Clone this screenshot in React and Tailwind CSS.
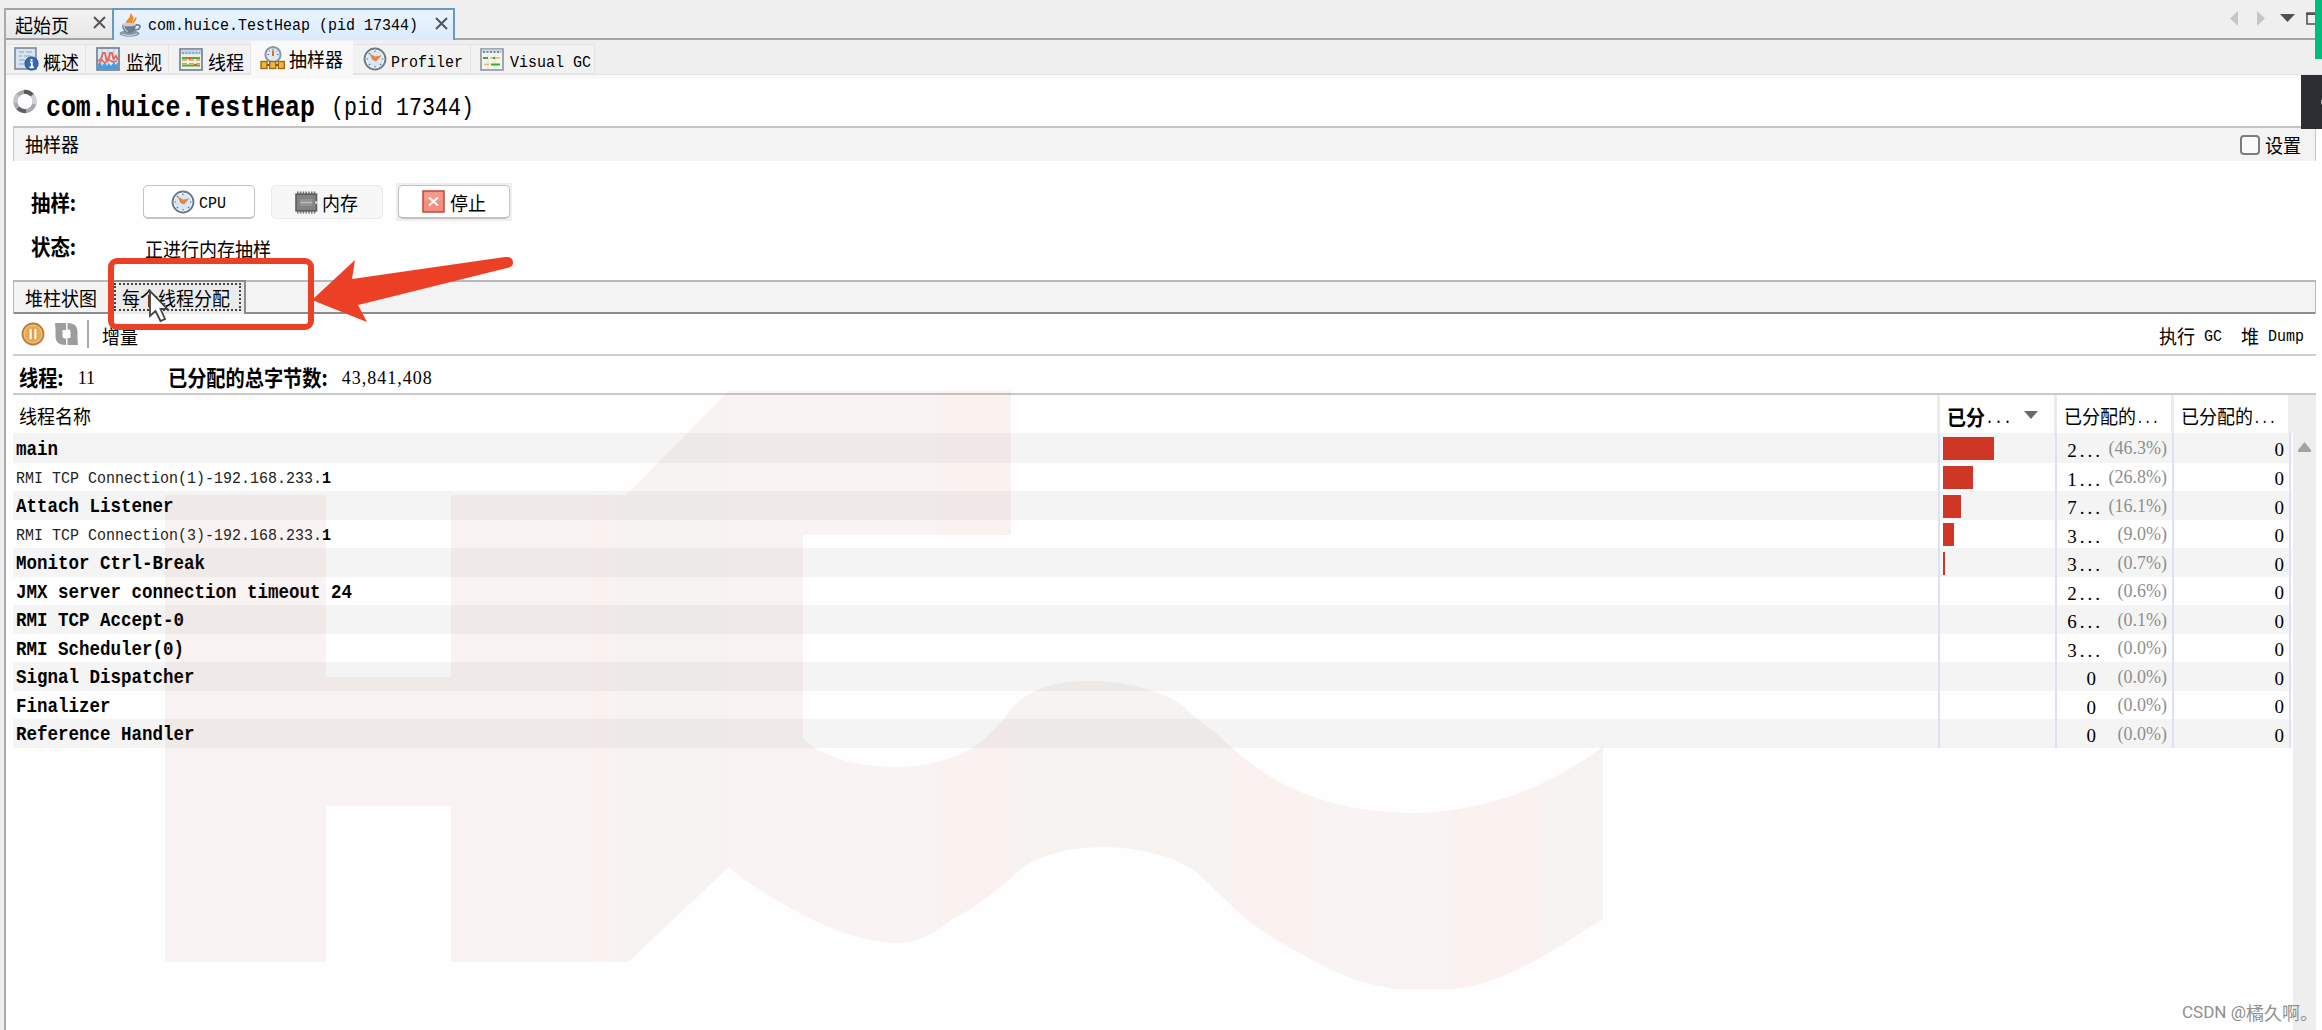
import React from "react";
import clsx from "clsx";

const threads = [
  { name: "main", bar: 51, bytes: "2...", pct: "(46.3%)" },
  { name: "RMI TCP Connection(1)-192.168.233.", tail: "1", bar: 30, bytes: "1...", pct: "(26.8%)" },
  { name: "Attach Listener", bar: 18, bytes: "7...", pct: "(16.1%)" },
  { name: "RMI TCP Connection(3)-192.168.233.", tail: "1", bar: 11, bytes: "3...", pct: "(9.0%)" },
  { name: "Monitor Ctrl-Break", bar: 2, bytes: "3...", pct: "(0.7%)" },
  { name: "JMX server connection timeout 24", bar: 0, bytes: "2...", pct: "(0.6%)" },
  { name: "RMI TCP Accept-0", bar: 0, bytes: "6...", pct: "(0.1%)" },
  { name: "RMI Scheduler(0)", bar: 0, bytes: "3...", pct: "(0.0%)" },
  { name: "Signal Dispatcher", bar: 0, bytes: "0", pct: "(0.0%)" },
  { name: "Finalizer", bar: 0, bytes: "0", pct: "(0.0%)" },
  { name: "Reference Handler", bar: 0, bytes: "0", pct: "(0.0%)" },
];

// Chinese label
function Cn({ children, className }) {
  return (
    <span
      className={clsx(
        "inline-block whitespace-pre font-['Noto_Sans_CJK_SC',sans-serif] leading-none scale-y-[1.1]",
        className || "text-[18px]"
      )}
    >
      {children}
    </span>
  );
}

// Fixed pitch latin text, 9px per character by default
function Mono({ children, className }) {
  return (
    <span
      className={clsx(
        "inline-block whitespace-pre font-['Liberation_Mono',monospace] leading-none scale-y-[1.15]",
        className || "text-[15px]"
      )}
    >
      {children}
    </span>
  );
}

// Numbers, serif digits are half an em wide
function Num({ children, className }) {
  return (
    <span
      className={clsx(
        "inline-block whitespace-pre font-['Liberation_Serif',serif] leading-none",
        className || "text-[18px]"
      )}
    >
      {children}
    </span>
  );
}

/* ---------- icons ---------- */

function CloseIcon() {
  return (
    <svg width="13" height="13" viewBox="0 0 13 13" stroke="#555" strokeWidth="2">
      <path d="M1 1L12 12M12 1L1 12" />
    </svg>
  );
}

function JavaIcon() {
  return (
    <svg width="23" height="24" viewBox="0 0 23 24" fill="none">
      <path d="M9 12C3 8 13 6 11 0C18 5 12 8 13 12Z" fill="#ee8a2c" />
      <path d="M14 11C13 8 18 7 16.5 4.5" stroke="#ee8a2c" strokeWidth="1.8" />
      <ellipse cx="10.5" cy="20.5" rx="10" ry="3.2" fill="#8796a3" />
      <path d="M3 11H17C17 17 14 20 10 20C6 20 3 17 3 11Z" fill="#6d7f8f" />
      <ellipse cx="10" cy="11.5" rx="7" ry="1.8" fill="#c6d1da" />
      <path d="M17 12C23 11 22 17 15 17" stroke="#6d7f8f" strokeWidth="1.8" />
      <path d="M5 13C5.5 16 7 18 9 18.6" stroke="#b5c2cd" strokeWidth="1.4" />
      <path d="M3 21C8 23 13 23 18 20.5" stroke="#d5dde3" />
    </svg>
  );
}

function OverviewIcon() {
  return (
    <svg width="25" height="24" viewBox="0 0 25 24">
      <rect x="1" y="1" width="21" height="21" fill="#d7e4f0" stroke="#7a8998" strokeWidth="1.6" />
      <path d="M5 5H10M12 5H18M5 9H8M10 9H17M5 13H11M5 17H10" stroke="#8fa1b2" strokeWidth="1.2" />
      <circle cx="17.5" cy="16.5" r="6.6" fill="#3566c0" stroke="#224c9a" />
      <path d="M17.5 12V14M16 15.4H17.8V20M15.6 20.2H19.8" stroke="#fff" strokeWidth="1.9" />
    </svg>
  );
}

function MonitorIcon() {
  return (
    <svg width="24" height="24" viewBox="0 0 24 24" fill="none">
      <rect x="1" y="1" width="22" height="22" fill="#dbe8f5" stroke="#6b7c8e" strokeWidth="1.6" />
      <path d="M6 2V22M12 2V22M18 2V22" stroke="#b9c9d9" />
      <path d="M2 22V17L4 15L6 19L9 15L11 19L13 16L15 19L18 15L20 18L22 15V22Z" fill="#4b9be0" />
      <path d="M2 14L5 12L7 6H9L10.5 13L13 11L14 6H16L17.5 12L20 9L22 13" stroke="#e4685c" strokeWidth="1.9" />
      <path d="M3 16L6 13L9 16L13 13L17 15L21 14" stroke="#e4685c" strokeWidth="1.5" />
    </svg>
  );
}

function ThreadsIcon() {
  return (
    <svg width="24" height="23" viewBox="0 0 24 23" fill="none">
      <rect x="1" y="1" width="22" height="21" fill="#eef1e4" stroke="#6b7c8e" strokeWidth="1.6" />
      <path d="M2 4H22" stroke="#c3d4e6" strokeWidth="4.5" />
      <path d="M3 5H21" stroke="#5b7ea8" strokeWidth="1.2" strokeDasharray="2 1.4" />
      <path d="M3 10H21M3 17.5H21" stroke="#4cae3e" strokeWidth="2" />
      <path d="M3 12H21M3 15.6H21" stroke="#ee9a3c" strokeWidth="1.4" strokeDasharray="5 2" />
      <path d="M9 10.5H12M15 17H18" stroke="#de5a3a" strokeWidth="1.8" />
    </svg>
  );
}

function SamplerIcon() {
  return (
    <svg width="25" height="24" viewBox="0 0 25 24" fill="none">
      <circle cx="13" cy="8.7" r="7.6" fill="#dce9f6" stroke="#8a98a8" strokeWidth="2" />
      <path d="M13 4.5V10" stroke="#e2711d" strokeWidth="2" />
      <path d="M13 2.5V4M7.5 8.5H9M17 8.5H18.5M9.2 4.8L10 5.6M16.8 4.8L16 5.6" stroke="#55708c" />
      <path d="M6 19H20" stroke="#7a5410" strokeWidth="2" />
      <g fill="#f3b63c" stroke="#a3690c" strokeWidth="1.4">
        <rect x="1" y="15.5" width="6" height="7" />
        <rect x="9.7" y="15.5" width="6" height="7" />
        <rect x="18.3" y="15.5" width="6" height="7" />
      </g>
    </svg>
  );
}

function ClockIcon() {
  return (
    <svg width="24" height="24" viewBox="0 0 24 24" fill="none">
      <circle cx="12" cy="12" r="10.4" fill="#d6e7f7" stroke="#6f7a86" strokeWidth="2" />
      <circle cx="12" cy="12" r="8.9" stroke="#f6fafd" strokeWidth="1" />
      <path d="M12 3.5V5M12 19V20.5M3.5 12H5M19 12H20.5M5.8 5.8L7 7M17 17L18.2 18.2M5.8 18.2L7 17" stroke="#5b7590" strokeWidth="1.2" />
      <path d="M6.5 6.5L12 9.5L18.5 8.5L13 14.5L9.5 13Z" fill="#e88443" />
    </svg>
  );
}

function VisualGcIcon() {
  return (
    <svg width="24" height="23" viewBox="0 0 24 23" fill="none">
      <rect x="1" y="1" width="22" height="21" fill="#f4f6ee" stroke="#8a949f" strokeWidth="1.6" />
      <path d="M2 3H22" stroke="#cdd9e6" strokeWidth="3" />
      <path d="M3 4H21" stroke="#5a6f88" strokeWidth="1.3" strokeDasharray="2 1.5" />
      <path d="M8 6V21M15 6V21" stroke="#dde2e4" />
      <path d="M3 10H8M11 16.5H20" stroke="#36ac36" strokeWidth="1.8" />
      <path d="M10 10H20M4 16.5H9" stroke="#f0b85c" strokeWidth="1.4" />
      <path d="M13 10H15" stroke="#36ac36" strokeWidth="1.8" />
    </svg>
  );
}

function SpinnerIcon() {
  return (
    <svg width="24" height="25" viewBox="0 0 24 25" fill="none" strokeWidth="4">
      <circle cx="12" cy="12.5" r="9.6" stroke="#a9a9ae" />
      <path d="M11 2.9A9.6 9.6 0 0 1 19 6" stroke="#56565c" />
      <path d="M19.5 6.5A9.6 9.6 0 0 1 21.3 15" stroke="#d2d2d6" />
      <path d="M13 22.1A9.6 9.6 0 0 1 5 19" stroke="#5f5f66" />
      <path d="M2.6 14A9.6 9.6 0 0 1 5 6" stroke="#c6c6ca" />
    </svg>
  );
}

function MemoryIcon() {
  return (
    <svg width="24" height="23" viewBox="0 0 24 23" fill="none">
      <path d="M3 1.8H22M3 21.2H22" stroke="#777" strokeWidth="2.6" strokeDasharray="1.6 1.2" />
      <rect x="2" y="3.2" width="20.5" height="16.6" fill="#828282" stroke="#5c5c5c" strokeWidth="1.6" />
      <rect x="6" y="8" width="12.5" height="7" fill="#949494" />
      <path d="M6.5 11.5H18" stroke="#bdbdbd" strokeWidth="1.4" />
      <circle cx="22.5" cy="11.5" r="1.5" fill="#d8d8d8" />
    </svg>
  );
}

function StopIcon() {
  return (
    <svg width="23" height="23" viewBox="0 0 23 23">
      <rect x="1" y="1" width="21" height="21" fill="#f58d7e" stroke="#bd5044" strokeWidth="1.6" />
      <rect x="2.5" y="2.5" width="18" height="8" fill="#f7998b" />
      <path d="M7 7.5L16 15.5M16 7.5L7 15.5" stroke="#fff" strokeWidth="2" />
    </svg>
  );
}

function PauseIcon() {
  return (
    <svg width="24" height="24" viewBox="0 0 24 24">
      <circle cx="12" cy="12" r="10.6" fill="#e9a851" stroke="#b07e3a" strokeWidth="1.6" />
      <circle cx="12" cy="12" r="8.8" fill="none" stroke="#f3c587" strokeWidth="1" />
      <path d="M9.6 6.5V17.5M14.4 6.5V17.5" stroke="#cf9440" strokeWidth="3.8" />
      <path d="M9.6 6.8V17.2M14.4 6.8V17.2" stroke="#fdf3df" strokeWidth="2.4" />
    </svg>
  );
}

function RefreshIcon() {
  return (
    <svg width="25" height="24" viewBox="0 0 25 24" fill="#9d9d9d">
      <path d="M1 1H12V8H8.5V14C8.5 16 9.5 16.5 12 16.5V23C5 23 1.5 20 1.5 14V7Z" />
      <path d="M24 23H13.5V16H16.5V10C16.5 8 15.5 7.5 13.5 7.5V1C20 1 23.5 4 23.5 10V17Z" />
    </svg>
  );
}

/* ---------- header ---------- */

function WindowTabs() {
  return (
    <div className="flex h-[32px] bg-[#efefef]">
      <div className="flex w-[106px] items-center border-y-2 border-[#a2a3a8] bg-gradient-to-b from-[#f2f2f2] to-[#e7e7e7] pl-[9px]">
        <Cn className="-mt-px text-[18px]">起始页</Cn>
        <span className="ml-[24px] -mt-1">
          <CloseIcon />
        </span>
      </div>
      <div className="flex w-[343px] items-center border-x-2 border-t-2 border-[#6c98c0] bg-gradient-to-b from-[#eaf4ff] to-[#dbebfc] pl-[5px]">
        <JavaIcon />
        <Mono className="ml-[6px] mt-[1px] text-[15px]">com.huice.TestHeap (pid 17344)</Mono>
        <span className="ml-[17px] -mt-1">
          <CloseIcon />
        </span>
      </div>
      <div className="flex flex-1 items-start justify-end border-b-2 border-[#a2a3a8] pt-[2px]">
        <svg width="92" height="18" viewBox="0 0 92 18">
          <path d="M8 1V16L0 8.5Z" fill="#c6c6c6" />
          <path d="M27 1V16L35 8.5Z" fill="#c6c6c6" />
          <path d="M50 4H65L57.5 12Z" fill="#4f4f4f" />
          <path d="M77 3H95V14H77Z" fill="none" stroke="#555" strokeWidth="1.6" />
          <path d="M76 4H92" stroke="#555" strokeWidth="2" />
        </svg>
      </div>
    </div>
  );
}

function SubTabs() {
  const base = "flex h-[30px] items-center border-r border-y border-[#e4e4e4] bg-[#f2f2f2]";
  return (
    <>
      <div className="flex h-[35px] items-end border-b border-[#e4e4e4] bg-[#efefef]">
        <div className={clsx(base, "w-[80px] pl-[8px]")}>
          <OverviewIcon />
          <Cn className="ml-[4px] mt-1 text-[18px]">概述</Cn>
        </div>
        <div className={clsx(base, "w-[83px] pl-[10px]")}>
          <MonitorIcon />
          <Cn className="ml-[6px] mt-1 text-[18px]">监视</Cn>
        </div>
        <div className={clsx(base, "w-[82px] pl-[10px]")}>
          <ThreadsIcon />
          <Cn className="ml-[5px] mt-1 text-[18px]">线程</Cn>
        </div>
        <div className="-mb-px flex h-[34px] w-[102px] items-center bg-[#f9f9f9] pl-[9px]">
          <SamplerIcon />
          <Cn className="ml-[4px] text-[18px]">抽样器</Cn>
        </div>
        <div className={clsx(base, "w-[118px] pl-[10px]")}>
          <ClockIcon />
          <Mono className="ml-[4px] mt-[6px] text-[15px]">Profiler</Mono>
        </div>
        <div className={clsx(base, "w-[124px] pl-[9px]")}>
          <VisualGcIcon />
          <Mono className="ml-[6px] mt-[6px] text-[15px]">Visual GC</Mono>
        </div>
      </div>
      <div className="h-1 bg-[#f9f9f9]" />
    </>
  );
}

/* ---------- sampler controls ---------- */

function SamplerControls() {
  const btn = "flex items-center rounded-[5px] border";
  return (
    <div className="h-[119px] pt-[22px]">
      <div className="flex h-[38px] items-center">
        <Cn className="ml-[18px] w-[109px] text-[19.4px] font-bold">抽样:</Cn>
        <div className={clsx(btn, "ml-[3px] h-[34px] w-[112px] border-[#c3c3c3] border-b-2 bg-white pl-[27px]")}>
          <ClockIcon />
          <Mono className="ml-[4px] mt-[4px] text-[15px]">CPU</Mono>
        </div>
        <div className={clsx(btn, "ml-[16px] h-[34px] w-[112px] border-[#e9e9e9] bg-[#f7f7f7] pl-[22px]")}>
          <MemoryIcon />
          <Cn className="ml-[4px] text-[18px]">内存</Cn>
        </div>
        <div className="ml-[13px] bg-[#efefef] p-[2px]">
          <div className={clsx(btn, "h-[34px] w-[112px] border-[#c3c3c3] border-b-2 bg-white pl-[23px]")}>
            <StopIcon />
            <Cn className="ml-[5px] text-[18px]">停止</Cn>
          </div>
        </div>
      </div>
      <div className="flex h-[56px] items-center">
        <Cn className="-mt-[7px] ml-[18px] w-[114px] text-[19.4px] font-bold">状态:</Cn>
        <Cn className="-mt-[2px] text-[18px]">正进行内存抽样</Cn>
      </div>
    </div>
  );
}

function ViewTabs() {
  return (
    <div className="flex h-[34px] border-x border-t-2 border-[#b9b9b9] bg-[#f3f3f3]">
      <div className="flex w-[96px] items-center border-b-2 border-[#8c8c8c] pl-[11px]">
        <Cn className="-mt-px text-[18px]">堆柱状图</Cn>
      </div>
      <div className="-mt-[2px] flex w-[136px] items-start border-r-2 border-t-2 border-[#8c8c8c] bg-[#ebebeb] pl-[4px] pt-[1px]">
        <div className="flex h-[28px] w-[127px] items-center border-2 border-dotted border-[#444] pl-[6px]">
          <Cn className="-mt-px text-[18px]">每个线程分配</Cn>
        </div>
      </div>
      <div className="flex-1 border-b-2 border-[#8c8c8c]" />
    </div>
  );
}

function Toolbar() {
  return (
    <div className="flex h-[42px] items-center border-b-2 border-[#cfcfcf] pl-[8px] pr-[12px]">
      <span className="-mt-px">
        <PauseIcon />
      </span>
      <span className="-mt-px ml-[9px]">
        <RefreshIcon />
      </span>
      <span className="ml-[8px] h-[28px] w-[2px] bg-[#a9a9a9]" />
      <Cn className="ml-[13px] mt-px text-[18px]">增量</Cn>
      <div className="ml-auto mt-px flex items-center">
        <Cn>执行</Cn>
        <Mono className="ml-[9px] mt-[3px] text-[15px]">GC</Mono>
        <Cn className="ml-[19px] text-[18px]">堆</Cn>
        <Mono className="ml-[9px] mt-[3px] text-[15px]">Dump</Mono>
      </div>
    </div>
  );
}

/* ---------- thread table ---------- */

function TableHeader() {
  const cell = "flex h-full items-center border-[#ebebeb] pt-[2px]";
  return (
    <div className="flex h-[38px]">
      <div className={clsx(cell, "w-[1927px] border-r-3 pl-[6px]")}>
        <Cn>线程名称</Cn>
      </div>
      <div className={clsx(cell, "w-[117px] border-r-3 pl-[7px]")}>
        <Cn className="text-[19px] font-bold">已分</Cn>
        <Mono className="mt-[7px] text-[15px]">...</Mono>
        <svg className="ml-[12px]" width="14" height="8" viewBox="0 0 14 8">
          <path d="M0 0H14L7 8Z" fill="#6a6a6a" />
        </svg>
      </div>
      <div className={clsx(cell, "w-[117px] border-r-3 pl-[7px]")}>
        <Cn>已分配的</Cn>
        <Mono className="mt-[7px] text-[13px]">...</Mono>
      </div>
      <div className={clsx(cell, "w-[114px] pl-[7px]")}>
        <Cn>已分配的</Cn>
        <Mono className="mt-[7px] text-[13px]">...</Mono>
      </div>
      <div className="flex-1 bg-[#eeeeee]" />
    </div>
  );
}

function ThreadRow({ thread, index }) {
  return (
    <div
      className={clsx(
        "flex",
        index === 0 ? "h-[29.5px]" : "h-[28.5px]",
        index % 2 === 0 ? "bg-[#f4f4f4]" : "bg-[#fefefe]"
      )}
    >
      <div className="flex w-[1927px] items-center border-r-2 border-[#dbe3f3] pl-[3px] pt-[3px]">
        {thread.tail ? (
          <>
            <Mono className="text-[15px] text-[#222]">{thread.name}</Mono>
            <Mono className="text-[15px] font-bold">{thread.tail}</Mono>
          </>
        ) : (
          <Mono className="text-[17.5px] font-bold">{thread.name}</Mono>
        )}
      </div>
      <div className="w-[117px] border-r-2 border-[#dbe3f3] pl-[3px] pt-[3.5px]">
        {thread.bar > 0 && <div className="h-[23px] bg-[#d03625]" style={{ width: thread.bar }} />}
      </div>
      <div className="flex w-[117px] items-center border-r-2 border-[#dbe3f3] pr-[5px] pt-[1px]">
        <div className={clsx("flex w-[46px] justify-end pt-[4px]", thread.bytes === "0" && "pr-[7px]")}>
          <Num className={clsx("text-[19px]", thread.bytes !== "0" && "tracking-[3px]")}>{thread.bytes}</Num>
        </div>
        <Num className="ml-auto text-[18px] text-[#8e8e8e]">{thread.pct}</Num>
      </div>
      <div className="flex w-[117px] items-center justify-end border-r-2 border-[#dbe3f3] pr-[5px] pt-[4px]">
        <Num className="text-[19px]">0</Num>
      </div>
    </div>
  );
}

function ThreadTable() {
  return (
    <div className="flex flex-1 flex-col">
      <TableHeader />
      <div className="flex flex-1">
        <div className="w-[2279px]">
          {threads.map((t, i) => (
            <ThreadRow key={t.name} thread={t} index={i} />
          ))}
        </div>
        <div className="ml-[1px] flex flex-1 justify-center bg-[#eeeeee] pt-[9px]">
          <svg width="13" height="10" viewBox="0 0 13 10">
            <path d="M6.5 0L13 8V10H0V8Z" fill="#a3a3a3" />
          </svg>
        </div>
      </div>
    </div>
  );
}

/* ---------- overlays ---------- */

function Watermark() {
  return (
    <svg className="pointer-events-none absolute inset-0" width="2322" height="1030" viewBox="0 0 2322 1030">
      <defs>
        <linearGradient id="ribbon" gradientUnits="userSpaceOnUse" x1="0" y1="0" x2="2000" y2="0">
          <stop offset="0.295" stopColor="rgb(172,60,50)" />
          <stop offset="0.297" stopColor="rgb(195,30,0)" />
          <stop offset="0.303" stopColor="rgb(195,30,0)" />
          <stop offset="0.305" stopColor="rgb(172,60,50)" />
          <stop offset="0.309" stopColor="rgb(165,55,30)" />
          <stop offset="0.311" stopColor="rgb(122,60,15)" />
          <stop offset="0.362" stopColor="rgb(122,60,15)" />
          <stop offset="0.364" stopColor="rgb(172,60,50)" />
          <stop offset="0.468" stopColor="rgb(172,60,50)" />
          <stop offset="0.473" stopColor="rgb(190,30,10)" />
          <stop offset="0.503" stopColor="rgb(190,30,10)" />
          <stop offset="0.507" stopColor="rgb(122,60,15)" />
          <stop offset="0.615" stopColor="rgb(122,60,15)" />
          <stop offset="0.617" stopColor="rgb(190,30,10)" />
          <stop offset="0.655" stopColor="rgb(190,30,10)" />
          <stop offset="0.658" stopColor="rgb(172,60,50)" />
          <stop offset="0.724" stopColor="rgb(172,60,50)" />
          <stop offset="0.727" stopColor="rgb(190,30,10)" />
          <stop offset="0.768" stopColor="rgb(190,30,10)" />
          <stop offset="0.771" stopColor="rgb(122,60,15)" />
        </linearGradient>
      </defs>
      <path
        fill="url(#ribbon)"
        fillOpacity="0.06"
        d="M165 495H326V677H451V495H626L729 391H1011V535H803V738
           C821 757 856 767 899 767C933 766 958 757 975 746C992 734 1001 722 1014 706
           C1032 688 1056 681 1091 681C1127 681 1162 691 1183 706C1200 723 1213 729 1231 747
           C1283 795 1345 813 1418 813C1490 811 1556 783 1603 746
           V919C1573 937 1548 956 1512 972C1477 988 1458 989 1446 989H1397
           C1367 985 1345 977 1318 963C1286 946 1256 930 1232 906L1201 876
           C1180 857 1140 847 1101 847C1060 848 1038 857 1022 868
           C995 892 977 907 951 920C933 935 915 943 896 943C863 941 833 931 803 915
           C773 898 749 886 729 867L628 962H451V806H326V962H165Z"
      />
    </svg>
  );
}

function Annotations() {
  return (
    <>
      <svg className="absolute left-[148px] top-[289px]" width="22" height="34" viewBox="0 0 22 34">
        <path d="M2 2V27L7.5 22L12.5 32L17 30L12.5 20H19.5Z" fill="#fff" stroke="#444" strokeWidth="1.8" />
      </svg>
      <div className="absolute left-[108px] top-[258px] h-[72px] w-[206px] rounded-[9px] border-6 border-[#eb3f26]" />
      <svg className="absolute left-[310px] top-[250px]" width="210" height="80" viewBox="310 250 210 80">
        <path
          d="M312 300L355 260L352 279L505 257Q513 256 513 263Q513 267 507 268L358 305L367 322Z"
          fill="#eb3f26"
        />
      </svg>
      <div className="absolute right-0 top-0 h-[59px] w-[7px] bg-[#00bd7e]" />
      <div className="absolute right-0 top-[75px] flex h-[54px] w-[21px] items-center justify-end overflow-hidden bg-[#2b2f33]">
        <div className="-mr-[4px] h-[6px] w-[5px] rounded-full bg-[#aaa]" />
      </div>
      <div className="absolute left-[2182px] top-[1003px] flex items-center whitespace-pre leading-none text-[#8f8f8f]">
        <span className="font-[Roboto,sans-serif] text-[17px]">CSDN @</span>
        <span className="font-['Noto_Sans_CJK_SC',sans-serif] text-[18px]">橘久啊。</span>
      </div>
    </>
  );
}

export default function App() {
  return (
    <div className="relative flex h-[1030px] w-[2322px] flex-col overflow-hidden bg-[#fefefe] text-black">
      <div className="h-[8px] bg-[#efefef]" />
      <div className="flex flex-1">
        <div className="w-1 bg-[#efefef]" />
        <div className="flex flex-1 flex-col border-l-2 border-[#a9a9ae]">
          <WindowTabs />
          <SubTabs />

          {/* title */}
          <div className="flex h-[47px] items-center pl-[7px]">
            <span className="-mt-[2px]">
              <SpinnerIcon />
            </span>
            <Mono className="ml-[9px] mt-[12px] text-[24.9px] font-bold">com.huice.TestHeap</Mono>
            <Mono className="ml-[16px] mt-[12px] text-[21.7px]">(pid 17344)</Mono>
          </div>

          <div className="ml-[7px] mr-[6px] flex flex-1 flex-col">
            <div className="flex h-[35px] items-center border-x border-t-2 border-[#c4c4c4] bg-[#f3f3f3] pl-[11px] pr-[14px]">
              <Cn className="-mt-[4px] text-[18px]">抽样器</Cn>
              <span className="ml-auto h-[20px] w-[20px] rounded-[4px] border-2 border-[#7d7d7d] bg-[#fafafa]" />
              <Cn className="ml-[5px] -mt-px text-[18px]">设置</Cn>
            </div>
            <SamplerControls />
            <ViewTabs />
            <Toolbar />

            {/* totals */}
            <div className="flex h-[39px] items-center border-b-2 border-[#c9c9c9] pl-[6px] pt-[7px]">
              <Cn className="text-[19.2px] font-bold">线程:</Cn>
              <Num className="ml-[14px] text-[18px]">11</Num>
              <Cn className="ml-[73px] text-[19.2px] font-bold">已分配的总字节数:</Cn>
              <Num className="ml-[14px] text-[18px] tracking-[1px]">43,841,408</Num>
            </div>

            <ThreadTable />
          </div>
        </div>
      </div>

      <Watermark />
      <Annotations />
    </div>
  );
}
